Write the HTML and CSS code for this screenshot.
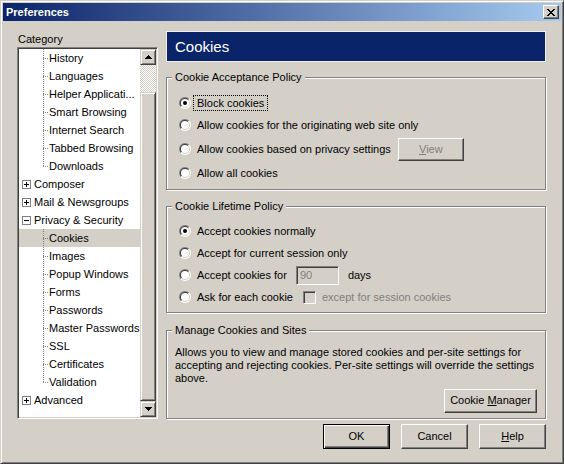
FILE: index.html
```html
<!DOCTYPE html>
<html>
<head>
<meta charset="utf-8">
<title>Preferences</title>
<link rel="stylesheet" href="styles.css">
</head>
<body>
<div class="window">
  <div class="titlebar">
    <span class="title">Preferences</span>
    <span class="close"><svg width="8" height="7" viewBox="0 0 8 7" shape-rendering="crispEdges"><path d="M0 0h2v1h-2zM6 0h2v1h-2zM1 1h2v1h-2zM5 1h2v1h-2zM2 2h4v1h-4zM3 3h2v1h-2zM2 4h4v1h-4zM1 5h2v1h-2zM5 5h2v1h-2zM0 6h2v1h-2zM6 6h2v1h-2z" fill="#000"/></svg></span>
  </div>
  <div class="main">
    <div class="left">
      <div class="cat-label">Category</div>
      <div class="tree">
        <div class="tree-list">
          <div class="row"><span class="indent"></span><span class="branch"></span><span class="txt">History</span></div>
          <div class="row"><span class="indent"></span><span class="branch"></span><span class="txt">Languages</span></div>
          <div class="row"><span class="indent"></span><span class="branch"></span><span class="txt">Helper Applicati...</span></div>
          <div class="row"><span class="indent"></span><span class="branch"></span><span class="txt">Smart Browsing</span></div>
          <div class="row"><span class="indent"></span><span class="branch"></span><span class="txt">Internet Search</span></div>
          <div class="row"><span class="indent"></span><span class="branch"></span><span class="txt">Tabbed Browsing</span></div>
          <div class="row"><span class="indent"></span><span class="branch last"></span><span class="txt">Downloads</span></div>
          <div class="row"><span class="exp plus"></span><span class="txt">Composer</span></div>
          <div class="row"><span class="exp plus"></span><span class="txt">Mail &amp; Newsgroups</span></div>
          <div class="row"><span class="exp minus"></span><span class="txt">Privacy &amp; Security</span></div>
          <div class="row selected"><span class="indent"></span><span class="branch"></span><span class="txt">Cookies</span></div>
          <div class="row"><span class="indent"></span><span class="branch"></span><span class="txt">Images</span></div>
          <div class="row"><span class="indent"></span><span class="branch"></span><span class="txt">Popup Windows</span></div>
          <div class="row"><span class="indent"></span><span class="branch"></span><span class="txt">Forms</span></div>
          <div class="row"><span class="indent"></span><span class="branch"></span><span class="txt">Passwords</span></div>
          <div class="row"><span class="indent"></span><span class="branch"></span><span class="txt">Master Passwords</span></div>
          <div class="row"><span class="indent"></span><span class="branch"></span><span class="txt">SSL</span></div>
          <div class="row"><span class="indent"></span><span class="branch"></span><span class="txt">Certificates</span></div>
          <div class="row"><span class="indent"></span><span class="branch last"></span><span class="txt">Validation</span></div>
          <div class="row"><span class="exp plus"></span><span class="txt">Advanced</span></div>
        </div>
        <div class="scrollbar">
          <div class="sb-btn"><svg width="7" height="4" viewBox="0 0 7 4" shape-rendering="crispEdges"><path d="M3 0h1v1h1v1h1v1h1v1h-7v-1h1v-1h1v-1h1z" fill="#000"/></svg></div>
          <div class="sb-track"></div>
          <div class="sb-thumb"></div>
          <div class="sb-btn"><svg width="7" height="4" viewBox="0 0 7 4" shape-rendering="crispEdges"><path d="M0 0h7v1h-1v1h-1v1h-1v1h-1v-1h-1v-1h-1v-1h-1z" fill="#000"/></svg></div>
        </div>
      </div>
    </div>
    <div class="right">
      <div class="header">Cookies</div>
      <fieldset class="group g1">
        <legend>Cookie Acceptance Policy</legend>
        <div class="opt"><span class="radio on"><i><b></b></i></span><span class="lbl focus">Block cookies</span></div>
        <div class="opt"><span class="radio"><i><b></b></i></span><span class="lbl">Allow cookies for the originating web site only</span></div>
        <div class="opt tall"><span class="radio"><i><b></b></i></span><span class="lbl">Allow cookies based on privacy settings</span><span class="btn view disabled"><u>V</u>iew</span></div>
        <div class="opt"><span class="radio"><i><b></b></i></span><span class="lbl">Allow all cookies</span></div>
      </fieldset>
      <fieldset class="group g2">
        <legend>Cookie Lifetime Policy</legend>
        <div class="opt"><span class="radio on"><i><b></b></i></span><span class="lbl">Accept cookies normally</span></div>
        <div class="opt"><span class="radio"><i><b></b></i></span><span class="lbl">Accept for current session only</span></div>
        <div class="opt"><span class="radio"><i><b></b></i></span><span class="lbl">Accept cookies for</span><span class="field">90</span><span class="days">days</span></div>
        <div class="opt"><span class="radio"><i><b></b></i></span><span class="lbl">Ask for each cookie</span><span class="check"></span><span class="dis">except for session cookies</span></div>
      </fieldset>
      <fieldset class="group g3">
        <legend>Manage Cookies and Sites</legend>
        <p class="desc">Allows you to view and manage stored cookies and per-site settings for<br>accepting and rejecting cookies. Per-site settings will override the settings<br>above.</p>
        <div class="mgr-row"><span class="btn mgr">Cookie <u>M</u>anager</span></div>
      </fieldset>
    </div>
  </div>
  <div class="actions">
    <span class="btn dlg default">OK</span>
    <span class="btn dlg">Cancel</span>
    <span class="btn dlg"><u>H</u>elp</span>
  </div>
</div>
</body>
</html>
```
FILE: styles.css
```css
* { box-sizing: border-box; }
html, body { margin: 0; padding: 0; }
body {
  width: 564px;
  height: 464px;
  background: #d4d0c8;
  font-family: "Liberation Sans", Arial, sans-serif;
  font-size: 11px;
  color: #000;
  overflow: hidden;
}
u { text-decoration: underline; }

.window {
  width: 564px;
  height: 464px;
  border: 1px solid;
  border-color: #d4d0c8 #404040 #404040 #d4d0c8;
  box-shadow: inset 1px 1px #fff, inset -1px -1px #808080;
  padding: 2px;
  display: flex;
  flex-direction: column;
}

.titlebar {
  height: 18px;
  flex: none;
  background: linear-gradient(to right, #0a246a, #a6caf0);
  display: flex;
  align-items: center;
  justify-content: space-between;
  padding-left: 3px;
}
.title { color: #fff; font-weight: bold; font-size: 11px; line-height: 14px; }
.close {
  width: 16px;
  height: 14px;
  margin-right: 2px;
  background: #d4d0c8;
  border: 1px solid;
  border-color: #fff #404040 #404040 #fff;
  box-shadow: inset -1px -1px #808080;
  display: flex;
  align-items: center;
  justify-content: center;
}
.close svg { display: block; }

.main {
  display: flex;
  gap: 8px;
  padding: 10px 15px 0 14px;
}

.left { width: 141px; padding-top: 2px; }
.cat-label { line-height: 13px; margin-bottom: 1px; padding-left: 1px; }

.tree {
  height: 372px;
  display: flex;
  background: #fff;
  border: 1px solid;
  border-color: #808080 #fff #fff #808080;
  box-shadow: inset 1px 1px #404040, inset -1px -1px #d4d0c8;
  padding: 1px;
}
.tree-list { flex: 1; min-width: 0; }
.row {
  height: 18px;
  display: flex;
  align-items: stretch;
  line-height: 18px;
  white-space: nowrap;
  overflow: hidden;
}
.row.selected { background: #d4d0c8; }
.indent { width: 24px; flex: none; }
.branch {
  width: 6px;
  flex: none;
  background:
    repeating-linear-gradient(to bottom, #808080 0 1px, transparent 1px 2px) left top / 1px 100% no-repeat,
    repeating-linear-gradient(to right, #808080 0 1px, transparent 1px 2px) left 9px / 6px 1px no-repeat;
}
.branch.last {
  background:
    repeating-linear-gradient(to bottom, #808080 0 1px, transparent 1px 2px) left top / 1px 9px no-repeat,
    repeating-linear-gradient(to right, #808080 0 1px, transparent 1px 2px) left 9px / 6px 1px no-repeat;
}
.exp {
  width: 9px;
  height: 9px;
  flex: none;
  align-self: center;
  margin: 0 3px;
  border: 1px solid #808080;
}
.exp.plus {
  background:
    linear-gradient(#000, #000) center / 5px 1px no-repeat,
    linear-gradient(#000, #000) center / 1px 5px no-repeat,
    #fff;
}
.exp.minus {
  background: linear-gradient(#000, #000) center / 5px 1px no-repeat, #fff;
}

.scrollbar {
  width: 16px;
  flex: none;
  display: flex;
  flex-direction: column;
}
.sb-btn, .sb-thumb {
  background: #d4d0c8;
  border: 1px solid;
  border-color: #d4d0c8 #404040 #404040 #d4d0c8;
  box-shadow: inset 1px 1px #fff, inset -1px -1px #808080;
}
.sb-btn {
  height: 16px;
  flex: none;
  display: flex;
  align-items: center;
  justify-content: center;
}
.sb-btn svg { display: block; }
.sb-track {
  height: 27px;
  flex: none;
  background: repeating-conic-gradient(#d4d0c8 0 25%, #fff 0 50%) 0 0 / 2px 2px;
}
.sb-thumb { flex: 1; }

.right { width: 380px; display: flex; flex-direction: column; }
.header {
  height: 31px;
  flex: none;
  background: #0a246a;
  border: 1px solid #f0f0f0;
  color: #fff;
  font-size: 15px;
  padding-left: 8px;
  display: flex;
  align-items: center;
}

.group {
  margin: 9px 0 0;
  border: 1px solid #808080;
  box-shadow: inset 1px 1px #fff, 1px 1px #fff;
  padding: 0 8px 5px 5px;
  min-width: 0;
}
.group legend {
  padding: 0 3px;
  line-height: 13px;
  background: #d4d0c8;
}
.g1 { padding-top: 8px; }
.g2 { margin-top: 10px; padding-top: 7px; padding-bottom: 4px; }
.g3 { margin-top: 11px; padding-top: 9px; padding-bottom: 5px; }

.opt {
  display: flex;
  align-items: center;
  height: 22px;
  padding-left: 7px;
  white-space: nowrap;
}
.opt.tall { height: 26px; }

.radio {
  width: 12px;
  height: 12px;
  flex: none;
  border-radius: 50%;
  background: linear-gradient(135deg, #808080 50%, #fff 50%);
  padding: 1px;
  margin-right: 2px;
}
.radio i {
  display: block;
  width: 10px;
  height: 10px;
  border-radius: 50%;
  background: linear-gradient(135deg, #404040 50%, #d4d0c8 50%);
  padding: 1px;
}
.radio b {
  display: flex;
  align-items: center;
  justify-content: center;
  width: 8px;
  height: 8px;
  border-radius: 50%;
  background: #fff;
}
.radio.on b::after {
  content: "";
  width: 4px;
  height: 4px;
  border-radius: 50%;
  background: #000;
}

.lbl {
  border: 1px dotted transparent;
  padding: 0 3px;
  line-height: 14px;
}
.lbl.focus { border-color: #000; }

.btn {
  display: inline-block;
  text-align: center;
  background: #d4d0c8;
  border: 1px solid;
  border-color: #fff #404040 #404040 #fff;
  box-shadow: inset -1px -1px #808080;
  white-space: nowrap;
}
.btn.disabled { color: #808080; }
.view { width: 66px; height: 23px; line-height: 20px; margin-left: 3px; }

.field {
  width: 43px;
  height: 19px;
  margin-left: 5px;
  background: #d4d0c8;
  border: 1px solid;
  border-color: #808080 #fff #fff #808080;
  box-shadow: inset 1px 1px #404040, inset -1px -1px #d4d0c8;
  color: #808080;
  padding-left: 3px;
  line-height: 17px;
}
.days { margin-left: 9px; }

.check {
  width: 13px;
  height: 13px;
  flex: none;
  margin-left: 6px;
  margin-right: 6px;
  background: #d4d0c8;
  border: 1px solid;
  border-color: #808080 #fff #fff #808080;
  box-shadow: inset 1px 1px #404040, inset -1px -1px #d4d0c8;
}
.dis { color: #808080; }

.desc {
  margin: 0 0 0 3px;
  line-height: 13px;
  white-space: nowrap;
}
.mgr-row { display: flex; justify-content: flex-end; margin-top: 4px; }
.mgr { width: 93px; height: 24px; line-height: 21px; }

.actions {
  display: flex;
  justify-content: flex-end;
  gap: 11px;
  padding: 5px 15px 0 0;
}
.dlg { width: 67px; height: 25px; line-height: 22px; }
.dlg.default {
  border: 1px solid #000;
  box-shadow: inset 1px 1px #fff, inset -1px -1px #404040, inset -2px -2px #808080;
}
```
